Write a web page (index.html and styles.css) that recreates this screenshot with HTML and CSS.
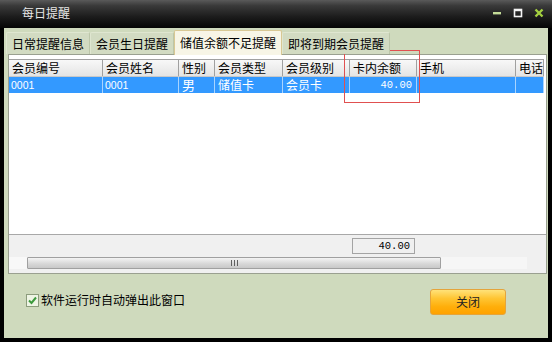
FILE: index.html
```html
<!DOCTYPE html>
<html>
<head>
<meta charset="utf-8">
<link rel="stylesheet" href="styles.css">
</head>
<body>
<div class="window">
  <div class="titlebar">
    <span class="title">每日提醒</span>
    <div class="controls">
      <svg class="ctl" width="10" height="10" viewBox="0 0 10 10"><rect x="1" y="4" width="8" height="2.4" fill="#c4dc98"/></svg>
      <svg class="ctl" width="10" height="10" viewBox="0 0 10 10"><rect x="1.5" y="1.5" width="7" height="7" fill="none" stroke="#f4f4f4" stroke-width="1.6"/><rect x="1" y="1" width="8" height="2.2" fill="#f4f4f4"/></svg>
      <svg class="ctl" width="10" height="10" viewBox="0 0 10 10"><path d="M1.5 1.5 L8.5 8.5 M8.5 1.5 L1.5 8.5" stroke="#a4d040" stroke-width="2.4"/></svg>
    </div>
  </div>
  <div class="client">
    <div class="tabs">
      <div class="tab">日常提醒信息</div>
      <div class="tab">会员生日提醒</div>
      <div class="tab active">储值余额不足提醒</div>
      <div class="tab">即将到期会员提醒</div>
    </div>
    <div class="page">
      <div class="grid">
        <div class="row head">
          <div class="cell c1">会员编号</div>
          <div class="cell c2">会员姓名</div>
          <div class="cell c3">性别</div>
          <div class="cell c4">会员类型</div>
          <div class="cell c5">会员级别</div>
          <div class="cell c6">卡内余额</div>
          <div class="cell c7">手机</div>
          <div class="cell c8">电话</div>
        </div>
        <div class="row sel">
          <div class="cell c1 num">0001</div>
          <div class="cell c2 num">0001</div>
          <div class="cell c3 big">男</div>
          <div class="cell c4">储值卡</div>
          <div class="cell c5">会员卡</div>
          <div class="cell c6 money">40.00</div>
          <div class="cell c7"></div>
          <div class="cell c8"></div>
        </div>
      </div>
      <div class="foot">
        <div class="sumrow"><div class="sumbox">40.00</div></div>
        <div class="hscroll">
          <div class="lead"></div>
          <div class="thumb"><span class="grip"></span><span class="grip"></span><span class="grip"></span></div>
          <div class="track"></div>
        </div>
      </div>
    </div>
    <div class="bottom">
      <label class="chk">
        <span class="box"><svg width="11" height="11" viewBox="0 0 11 11"><path d="M2 5.5 L4.5 8 L9 2.5" fill="none" stroke="#3c9a3c" stroke-width="2"/></svg></span>
        <span class="chktext">软件运行时自动弹出此窗口</span>
      </label>
      <button class="closebtn">关闭</button>
    </div>
  </div>
  <div class="annot"></div>
</div>
</body>
</html>
```
FILE: styles.css
```css
html, body {
  margin: 0;
  padding: 0;
  background: #000;
}
body {
  font-family: "Noto Sans CJK SC", "Noto Sans", sans-serif;
  font-size: 12px;
}
.window {
  position: relative;
  width: 552px;
  height: 342px;
  background: #000;
  display: flex;
  flex-direction: column;
  overflow: hidden;
}
.titlebar {
  height: 28px;
  flex: none;
  display: flex;
  align-items: center;
  background: linear-gradient(#5a5a5a 0%, #3a3a3a 20%, #1c1c1c 60%, #050505 100%);
}
.title {
  margin-left: 22px;
  margin-top: -2px;
  color: #e6e6e6;
  font-size: 12px;
  line-height: 14px;
}
.controls {
  margin-left: auto;
  margin-right: 8px;
  margin-top: -2px;
  display: flex;
  gap: 11px;
}
.ctl { display: block; }
.client {
  flex: 1;
  margin: 0 4px 4px 4px;
  background: #cfdabd;
  display: flex;
  flex-direction: column;
}
.tabs {
  height: 26px;
  flex: none;
  display: flex;
  align-items: flex-end;
  padding-left: 2px;
  position: relative;
  z-index: 1;
}
.tab {
  height: 22px;
  line-height: 22px;
  padding: 0 5px;
  background: #d2dbc2;
  border: 1px solid #dfe6d0;
  border-right-color: #bcc6a9;
  border-bottom: none;
  border-radius: 2px 2px 0 0;
  color: #000;
  box-sizing: border-box;
  white-space: nowrap;
}
.tab.active {
  height: 25px;
  line-height: 24px;
  margin-bottom: -1px;
  background: #f7f5e6;
  border: 1px solid #d8c894;
  border-bottom: none;
}
.page {
  flex: none;
  height: 220px;
  width: 539px;
  margin-left: 4px;
  box-sizing: border-box;
  border: 1px solid #9aa090;
  background: #fff;
  display: flex;
  flex-direction: column;
}
.grid {
  flex: 1;
  padding-top: 4px;
}
.row {
  display: flex;
  width: 535px;
}
.head {
  height: 18px;
  box-sizing: border-box;
  border-top: 1px solid #a0a0a0;
  border-bottom: 1px solid #c8c8c8;
  background: linear-gradient(#f8f8f8, #e4e4e4);
}
.head .cell {
  border-right: 1px solid #a0a0a0;
  line-height: 16px;
  color: #000;
}
.cell {
  box-sizing: border-box;
  padding-left: 3px;
  white-space: nowrap;
  font-size: 12px;
}
.c1 { width: 94px; }
.c2 { width: 76px; }
.c3 { width: 36px; }
.c4 { width: 68px; }
.c5 { width: 67px; }
.c6 { width: 67px; }
.c7 { width: 99px; }
.c8 { width: 28px; }
.sel {
  height: 16px;
  background: #3399ff;
}
.sel .cell {
  color: #fff;
  line-height: 16px;
  border-right: 1px solid #a8d4ff;
}
.sel .num {
  font-family: "Liberation Sans", sans-serif;
  font-size: 10.5px;
  padding-left: 2px;
}
.sel .big {
  font-size: 13px;
  line-height: 16px;
}
.sel .money {
  font-family: "Liberation Mono", monospace;
  font-size: 10.5px;
  text-align: right;
  padding-right: 4px;
}
.foot {
  flex: none;
  height: 39px;
  box-sizing: border-box;
  border-top: 1px solid #a8a8a8;
  background: #f0f0f0;
  display: flex;
  flex-direction: column;
}
.sumrow {
  height: 19px;
  display: flex;
  align-items: flex-end;
  padding-left: 343px;
  box-sizing: border-box;
}
.sumbox {
  width: 63px;
  height: 16px;
  box-sizing: border-box;
  border: 1px solid #a4a4a4;
  background: #f0f0f0;
  font-family: "Liberation Mono", monospace;
  font-size: 10.5px;
  line-height: 14px;
  text-align: right;
  padding-right: 4px;
  color: #000;
}
.hscroll {
  margin-top: 3px;
  height: 12px;
  display: flex;
}
.lead {
  width: 18px;
  background: #f8f8f8;
}
.thumb {
  width: 414px;
  box-sizing: border-box;
  border: 1px solid #a0a0a0;
  border-radius: 1px;
  background: linear-gradient(#f4f4f4, #d6d6d6 60%, #c8c8c8);
  display: flex;
  justify-content: center;
  align-items: center;
  gap: 2px;
}
.grip {
  width: 1px;
  height: 6px;
  background: #606060;
}
.track {
  width: 86px;
  background: #f6f6f6;
}
.bottom {
  flex: 1;
  display: flex;
  align-items: flex-start;
  padding: 15px 42px 0 22px;
}
.chk {
  display: flex;
  align-items: center;
  margin-top: 4px;
}
.box {
  width: 13px;
  height: 13px;
  box-sizing: border-box;
  border: 1px solid #8c9c7c;
  background: #eef4e4;
  display: flex;
  align-items: center;
  justify-content: center;
}
.box svg { display: block; }
.chktext {
  margin-left: 2px;
  line-height: 14px;
  color: #000;
}
.closebtn {
  margin-left: auto;
  width: 76px;
  height: 26px;
  box-sizing: border-box;
  border: 1px solid #e4a43c;
  border-radius: 3px;
  background: linear-gradient(#ffe27a 0%, #ffc533 35%, #ffae0a 70%, #ffa200 100%);
  font-family: "Noto Sans CJK SC", sans-serif;
  font-size: 12px;
  line-height: 14px;
  color: #222;
  padding: 0;
}
.annot {
  position: absolute;
  left: 344px;
  top: 50px;
  width: 76px;
  height: 53px;
  box-sizing: border-box;
  border: 1px solid #e05050;
  pointer-events: none;
}
```
